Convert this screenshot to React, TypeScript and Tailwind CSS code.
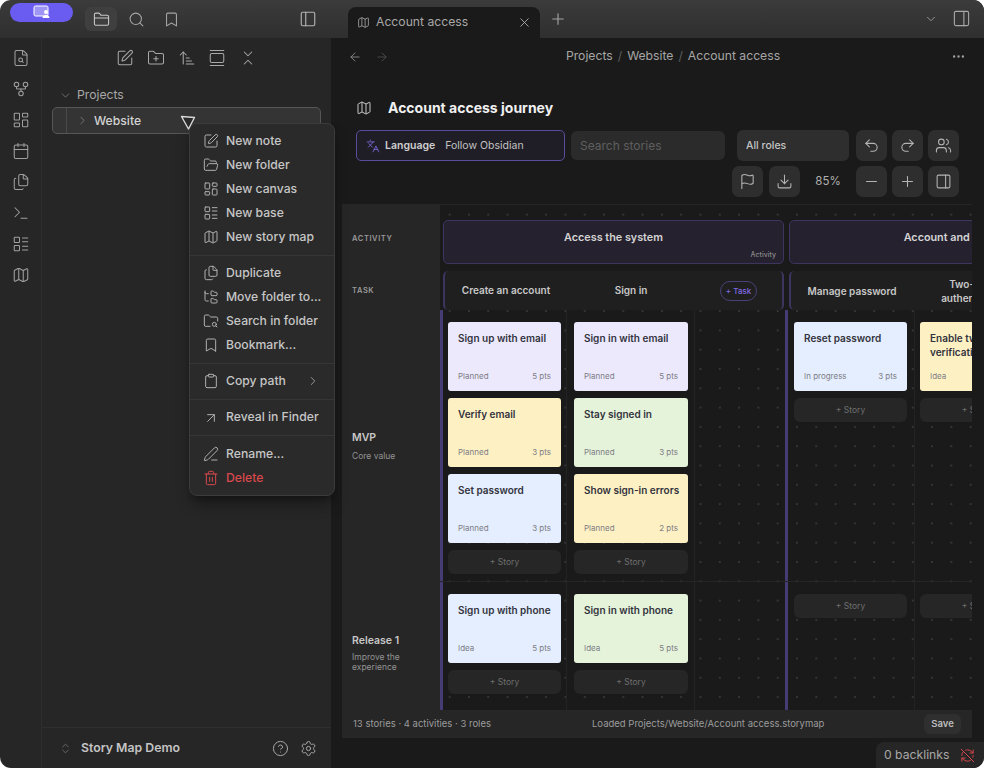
import {
  ArrowLeft,
  ArrowRight,
  ArrowUpNarrowWide,
  ArrowUpRight,
  Bookmark,
  Calendar,
  ChevronDown,
  ChevronRight,
  ChevronsDownUp,
  ChevronsUpDown,
  CircleHelp,
  Clipboard,
  Download,
  Ellipsis,
  FileSearch,
  Files,
  Flag,
  FolderClosed,
  FolderOpen,
  FolderPlus,
  FolderSearch,
  FolderTree,
  GalleryVertical,
  GitFork,
  Languages,
  LayoutDashboard,
  LayoutList,
  LucideIcon,
  Map as MapIcon,
  Minus,
  PanelLeft,
  PanelRight,
  PenLine,
  Plus,
  Redo2,
  RefreshCwOff,
  Search,
  Settings,
  SquarePen,
  Terminal,
  Trash2,
  Undo2,
  Users,
  X,
} from 'lucide-react';

type Tone = 'lavender' | 'yellow' | 'green' | 'blue';

interface Story {
  title: string;
  status: string;
  points?: string;
  tone: Tone;
}

const toneClass: Record<Tone, string> = {
  lavender: 'bg-[#ece9fd]',
  yellow: 'bg-[#fdf1c4]',
  green: 'bg-[#e5f3da]',
  blue: 'bg-[#e4eefe]',
};

const ribbon: LucideIcon[] = [FileSearch, GitFork, LayoutDashboard, Calendar, Files, Terminal, LayoutList, MapIcon];

const menu: { label: string; icon: LucideIcon; arrow?: boolean; danger?: boolean }[][] = [
  [
    { label: 'New note', icon: SquarePen },
    { label: 'New folder', icon: FolderOpen },
    { label: 'New canvas', icon: LayoutDashboard },
    { label: 'New base', icon: LayoutList },
    { label: 'New story map', icon: MapIcon },
  ],
  [
    { label: 'Duplicate', icon: Files },
    { label: 'Move folder to...', icon: FolderTree },
    { label: 'Search in folder', icon: FolderSearch },
    { label: 'Bookmark...', icon: Bookmark },
  ],
  [{ label: 'Copy path', icon: Clipboard, arrow: true }],
  [{ label: 'Reveal in Finder', icon: ArrowUpRight }],
  [
    { label: 'Rename...', icon: PenLine },
    { label: 'Delete', icon: Trash2, danger: true },
  ],
];

function IconButton({ icon: Icon }: { icon: LucideIcon }) {
  return (
    <button className="flex h-[31px] w-[31px] items-center justify-center rounded-[7px] bg-[#2e2e2e] text-[#b4b4b4]">
      <Icon size={17} strokeWidth={1.5} />
    </button>
  );
}

function StoryCard({ story }: { story: Story }) {
  return (
    <div className={`flex h-[68.5px] flex-col justify-between rounded-[3px] pb-[10px] pl-[10px] pr-[6px] pt-[9px] ${toneClass[story.tone]}`}>
      <p className="text-[10px] font-semibold leading-[14px] text-[#33333d]">{story.title}</p>
      <div className="flex justify-between pr-[4px] text-[8px] leading-[10px] text-[#7d7d85]">
        <span>{story.status}</span>
        {story.points && <span>{story.points}</span>}
      </div>
    </div>
  );
}

function AddStory() {
  return (
    <div className="flex h-[24px] items-center justify-center rounded-[6px] bg-[#262626] text-[8.5px] text-[#6f6f6f]">
      + Story
    </div>
  );
}

function Cell({ width, stories = [], pad = 'pl-[5px]', card = 'w-[113px]' }: {
  width: string;
  stories?: Story[];
  pad?: string;
  card?: string;
}) {
  return (
    <div className={`h-full shrink-0 border-r border-[#232323] pt-[12px] ${width} ${pad}`}>
      <div className={`flex flex-col gap-[7.5px] ${card}`}>
        {stories.map((s) => (
          <StoryCard key={s.title} story={s} />
        ))}
        <AddStory />
      </div>
    </div>
  );
}

function Menu() {
  return (
    <div className="absolute left-[189px] top-[123px] z-10 w-[146px] rounded-[8px] border border-[#3b3b3b] bg-[#2a2a2a] pb-[5px] pt-[5px] shadow-lg shadow-black/40">
      {menu.map((section, i) => (
        <div key={i}>
          {i > 0 && <div className="my-[5.6px] h-px bg-[#363636]" />}
          {section.map((item) => (
            <div
              key={item.label}
              className={`flex h-[24px] items-center gap-[7px] pl-[13px] text-[12.2px] font-medium whitespace-nowrap ${item.danger ? 'text-[#d9484c]' : 'text-[#c6c6c6]'}`}
            >
              <item.icon size={16} strokeWidth={1.5} className={item.danger ? 'text-[#d9484c]' : 'text-[#b0b0b0]'} />
              <span>{item.label}</span>
              {item.arrow && <ChevronRight size={14} strokeWidth={1.5} className="ml-auto mr-[14px] text-[#a8a8a8]" />}
            </div>
          ))}
        </div>
      ))}
    </div>
  );
}

function Sidebar() {
  return (
    <aside className="flex w-[331px] shrink-0 flex-col">
      <div className="flex h-[38px] items-center bg-linear-to-b from-[#3b3b3b] to-[#2f2f2f] pl-[10px]">
        <div className="-mt-[14px] flex h-[19px] w-[63px] items-center justify-center rounded-full bg-[#6a5cf0]">
          <svg width="18" height="14" viewBox="0 0 18 14" fill="none">
            <rect x="1" y="1" width="14" height="10" rx="1.5" fill="#c9c4fa" fillOpacity="0.55" stroke="#fff" strokeWidth="1" />
            <circle cx="13" cy="7" r="2" fill="#fff" />
            <path d="M9.5 13c0-2 1.5-3 3.5-3s3.5 1 3.5 3z" fill="#fff" />
          </svg>
        </div>
        <div className="ml-[12px] flex h-[24px] w-[32px] items-center justify-center rounded-[6px] bg-[#3f3f3f] text-[#c8c8c8]">
          <FolderClosed size={17} strokeWidth={1.5} />
        </div>
        <Search size={17} strokeWidth={1.5} className="ml-[11px] text-[#a4a4a4]" />
        <Bookmark size={17} strokeWidth={1.5} className="ml-[18px] text-[#a4a4a4]" />
        <PanelLeft size={18} strokeWidth={1.5} className="ml-[119px] text-[#b4b4b4]" />
      </div>
      <div className="flex min-h-0 flex-1">
        <nav className="flex w-[42px] shrink-0 flex-col items-center gap-[13px] border-r border-[#2e2e2e] bg-[#262626] pt-[11px] text-[#a0a0a0]">
          {ribbon.map((Icon, i) => (
            <Icon key={i} size={18} strokeWidth={1.4} />
          ))}
        </nav>
        <div className="flex min-w-0 flex-1 flex-col bg-[#262626]">
          <div className="flex items-center justify-center gap-[12.75px] pt-[11px] text-[#a8a8a8]">
            <SquarePen size={18} strokeWidth={1.4} />
            <FolderPlus size={18} strokeWidth={1.4} />
            <ArrowUpNarrowWide size={18} strokeWidth={1.4} />
            <GalleryVertical size={18} strokeWidth={1.4} />
            <ChevronsDownUp size={18} strokeWidth={1.4} />
          </div>
          <div className="mt-[18px] flex h-[20px] items-center gap-[5px] pl-[17px] text-[12.2px] text-[#a8a8a8]">
            <ChevronDown size={13} strokeWidth={1.5} className="text-[#7d7d7d]" />
            <span>Projects</span>
          </div>
          <div className="ml-[10px] mt-[2px] flex h-[27px] w-[269px] items-center rounded-[5px] border border-[#565656] bg-[#343434] text-[12.2px] font-medium text-[#d2d2d2]">
            <div className="flex h-full w-[14px] border-r border-[#4a4a4a]" />
            <ChevronRight size={13} strokeWidth={1.5} className="ml-[9px] text-[#808080]" />
            <span className="ml-[5px] pt-[1px]">Website</span>
          </div>
          <div className="mt-auto flex h-[41px] items-center border-t border-[#2f2f2f] pl-[17px] pr-[14px]">
            <ChevronsUpDown size={13} strokeWidth={1.5} className="text-[#777]" />
            <span className="ml-[9px] text-[12.3px] font-semibold text-[#c4c4c4]">Story Map Demo</span>
            <CircleHelp size={17} strokeWidth={1.4} className="ml-auto text-[#a8a8a8]" />
            <Settings size={17} strokeWidth={1.4} className="ml-[11px] text-[#a8a8a8]" />
          </div>
        </div>
      </div>
    </aside>
  );
}

function Toolbar() {
  return (
    <div className="flex flex-col gap-[5px] pl-[25px] pr-[25px]">
      <div className="flex items-center">
        <div className="flex h-[31px] w-[209px] items-center rounded-[5px] border border-[#5b4b9c] bg-[#1f1d26] pl-[9px] text-[10.5px]">
          <Languages size={14} strokeWidth={1.5} className="text-[#7d68d8]" />
          <span className="ml-[5px] font-semibold text-[#cfcfcf]">Language</span>
          <span className="ml-[10px] text-[#c2c2c2]">Follow Obsidian</span>
        </div>
        <div className="ml-[6px] flex h-[29px] w-[154px] items-center rounded-[6px] bg-[#2b2b2b] pl-[9px] text-[12px] text-[#5f5f5f]">
          Search stories
        </div>
        <div className="ml-[12px] flex h-[31px] w-[112px] items-center rounded-[6px] bg-[#2e2e2e] pl-[9px] text-[10.5px] font-medium text-[#c4c4c4]">
          All roles
        </div>
        <div className="ml-auto flex gap-[5px]">
          <IconButton icon={Undo2} />
          <IconButton icon={Redo2} />
          <IconButton icon={Users} />
        </div>
      </div>
      <div className="flex items-center justify-end">
        <IconButton icon={Flag} />
        <div className="ml-[6px]">
          <IconButton icon={Download} />
        </div>
        <span className="w-[56px] text-center text-[11.5px] text-[#b0b0b0]">85%</span>
        <div className="flex gap-[5px]">
          <IconButton icon={Minus} />
          <IconButton icon={Plus} />
          <IconButton icon={PanelRight} />
        </div>
      </div>
    </div>
  );
}

function Board() {
  return (
    <div className="ml-[11px] mr-[12px] mt-[7px] flex min-h-0 flex-1 flex-col border-t border-[#262626]">
      <div className="flex min-h-0 flex-1">
        <div className="flex w-[98px] shrink-0 flex-col bg-[#262626] pl-[10px]">
          <div className="flex h-[66px] items-center pt-[1px] text-[7.5px] font-semibold tracking-[0.08em] text-[#9a9a9a]">ACTIVITY</div>
          <div className="flex h-[39px] items-center pt-[1px] text-[7.5px] font-semibold tracking-[0.08em] text-[#9a9a9a]">TASK</div>
          <div className="flex h-[272px] flex-col justify-center">
            <p className="text-[10.5px] font-semibold leading-[14px] text-[#c8c8c8]">MVP</p>
            <p className="mt-[6px] text-[8.5px] leading-[10px] text-[#939393]">Core value</p>
          </div>
          <div className="flex h-[128px] flex-col justify-center pr-[20px] pt-[13px]">
            <p className="text-[10.5px] font-semibold leading-[14px] text-[#c8c8c8]">Release 1</p>
            <p className="mt-[4px] text-[8.5px] leading-[10px] text-[#939393]">Improve the experience</p>
          </div>
        </div>
        <div className="min-w-0 flex-1 overflow-hidden bg-[#1a1a1a] bg-[radial-gradient(circle,#353535_0.7px,transparent_0.9px)] bg-[size:19.3px_19.3px]">
          <div className="flex h-[66px] w-[900px] items-start gap-[5px] pl-[3px] pt-[15px]">
            <div className="relative flex h-[44px] w-[341px] shrink-0 items-center justify-center rounded-[5px] border border-[#3d3560] bg-[#25212f] pb-[8px] text-[10.8px] font-semibold text-[#d4d4d4]">
              Access the system
              <span className="absolute bottom-[3px] right-[7px] text-[7px] font-medium text-[#8a8a8a]">Activity</span>
            </div>
            <div className="flex h-[44px] w-[341px] shrink-0 items-center justify-center rounded-[5px] border border-[#3d3560] bg-[#25212f] pb-[8px] text-[10.8px] font-semibold text-[#d4d4d4]">
              Account and security
            </div>
          </div>
          <div className="flex h-[39px] w-[900px] gap-[5px] pl-[3px]">
            <div className="flex h-[39px] w-[341px] shrink-0 items-center rounded-[5px] border-x-2 border-[#3d3560] bg-[#1f1f1f] text-[10px] font-semibold text-[#c8c8c8]">
              <span className="w-[122px] text-center">Create an account</span>
              <span className="w-[128px] text-center">Sign in</span>
              <span className="ml-[25px] flex h-[20px] w-[37px] items-center justify-center rounded-full border border-[#4a3f78] text-[8px] font-medium text-[#7f6be0]">+ Task</span>
            </div>
            <div className="flex h-[39px] w-[341px] shrink-0 items-center rounded-[5px] border-l-2 border-[#3d3560] bg-[#1f1f1f] text-center text-[10px] font-semibold leading-[14px] text-[#c8c8c8]">
              <span className="w-[122px] shrink-0">Manage password</span>
              <span className="w-[126px] shrink-0">
                Two-factor
                <br />
                authentication
              </span>
            </div>
          </div>
          <div className="flex h-[272px] w-[900px] border-b border-[#262626]">
            <div className="flex w-[348px] shrink-0 border-x-[3px] border-[#463c74]">
              <Cell
                width="w-[124px]"
                stories={[
                  { title: 'Sign up with email', status: 'Planned', points: '5 pts', tone: 'lavender' },
                  { title: 'Verify email', status: 'Planned', points: '3 pts', tone: 'yellow' },
                  { title: 'Set password', status: 'Planned', points: '3 pts', tone: 'blue' },
                ]}
              />
              <Cell
                width="w-[128px]"
                pad="pl-[7px]"
                card="w-[114px]"
                stories={[
                  { title: 'Sign in with email', status: 'Planned', points: '5 pts', tone: 'lavender' },
                  { title: 'Stay signed in', status: 'Planned', points: '3 pts', tone: 'green' },
                  { title: 'Show sign-in errors', status: 'Planned', points: '2 pts', tone: 'yellow' },
                ]}
              />
            </div>
            <div className="flex shrink-0 pl-[1px]">
              <Cell width="w-[126px]" stories={[{ title: 'Reset password', status: 'In progress', points: '3 pts', tone: 'blue' }]} />
              <Cell width="w-[126px]" stories={[{ title: 'Enable two-factor verification', status: 'Idea', tone: 'yellow' }]} />
            </div>
          </div>
          <div className="flex h-[128px] w-[900px]">
            <div className="flex w-[348px] shrink-0 border-x-[3px] border-[#463c74]">
              <Cell width="w-[124px]" stories={[{ title: 'Sign up with phone', status: 'Idea', points: '5 pts', tone: 'blue' }]} />
              <Cell
                width="w-[128px]"
                pad="pl-[7px]"
                card="w-[114px]"
                stories={[{ title: 'Sign in with phone', status: 'Idea', points: '5 pts', tone: 'green' }]}
              />
            </div>
            <div className="flex shrink-0 pl-[1px]">
              <Cell width="w-[126px]" />
              <Cell width="w-[126px]" />
            </div>
          </div>
        </div>
      </div>
      <div className="flex h-[28px] shrink-0 items-center bg-[#262626] pl-[11px] pr-[11px] text-[9.5px] text-[#9c9c9c]">
        <span className="w-[239px]">13 stories · 4 activities · 3 roles</span>
        <span>Loaded Projects/Website/Account access.storymap</span>
        <button className="ml-auto flex h-[20px] w-[37px] items-center justify-center rounded-[6px] bg-[#2f2f2f] font-semibold text-[#bdbdbd]">Save</button>
      </div>
      <div className="h-[30px] shrink-0" />
    </div>
  );
}

function Main() {
  return (
    <main className="relative flex min-w-0 flex-1 flex-col bg-[#1a1a1a]">
      <div className="flex h-[38px] shrink-0 items-end bg-linear-to-b from-[#3b3b3b] to-[#2f2f2f] pl-[17px] pr-[13px]">
        <div className="flex h-[31px] w-[192px] items-center rounded-t-[8px] bg-[#1a1a1a] pl-[9px] pr-[8px] text-[12.2px] text-[#a8a8a8]">
          <MapIcon size={13} strokeWidth={1.5} />
          <span className="ml-[6px]">Account access</span>
          <X size={15} strokeWidth={1.5} className="ml-auto" />
        </div>
        <Plus size={18} strokeWidth={1.5} className="mb-[10px] ml-[9px] text-[#a4a4a4]" />
        <ChevronDown size={14} strokeWidth={1.5} className="mb-[12px] ml-auto text-[#a4a4a4]" />
        <PanelRight size={19} strokeWidth={1.4} className="mb-[10px] ml-[14px] text-[#a8a8a8]" />
      </div>
      <div className="relative flex h-[36px] shrink-0 items-center justify-center pl-[31px] pt-[1px] text-[12.2px] text-[#a6a6a6]">
        <ArrowLeft size={14} strokeWidth={1.5} className="absolute left-[17px] text-[#8c8c8c]" />
        <ArrowRight size={14} strokeWidth={1.5} className="absolute left-[44px] text-[#4f4f4f]" />
        <span>Projects</span>
        <span className="mx-[5px] text-[#5e5e5e]">/</span>
        <span>Website</span>
        <span className="mx-[5px] text-[#5e5e5e]">/</span>
        <span>Account access</span>
        <Ellipsis size={15} strokeWidth={1.8} className="absolute right-[18px] text-[#a0a0a0]" />
      </div>
      <div className="flex h-[56px] shrink-0 items-center pl-[25px] pt-[11px]">
        <MapIcon size={16} strokeWidth={1.5} className="text-[#c8c8c8]" />
        <h1 className="ml-[16px] text-[14px] font-bold text-[#f0f0f0]">Account access journey</h1>
      </div>
      <Toolbar />
      <Board />
      <div className="absolute bottom-0 right-0 flex h-[26px] w-[108px] items-center rounded-tl-[8px] bg-[#262626] pl-[8px] text-[12.2px] text-[#a8a8a8]">
        <span>0 backlinks</span>
        <RefreshCwOff size={15} strokeWidth={1.6} className="ml-[11px] text-[#d9484c]" />
      </div>
    </main>
  );
}

export default function App() {
  return (
    <div className="h-[768px] w-[984px] bg-white font-['Inter',sans-serif]">
      <div className="relative flex h-full overflow-hidden rounded-[11px]">
        <Sidebar />
        <Main />
        <Menu />
        {/* pointer over the tree row */}
        <svg className="absolute left-[180px] top-[115px] z-20" width="16" height="16" viewBox="0 0 16 16">
          <path d="M1.5 1.5 L14.5 2.5 L8.5 14 Z" fill="#2a2a2a" stroke="#d8d8d8" strokeWidth="1.4" strokeLinejoin="round" />
        </svg>
      </div>
    </div>
  );
}
